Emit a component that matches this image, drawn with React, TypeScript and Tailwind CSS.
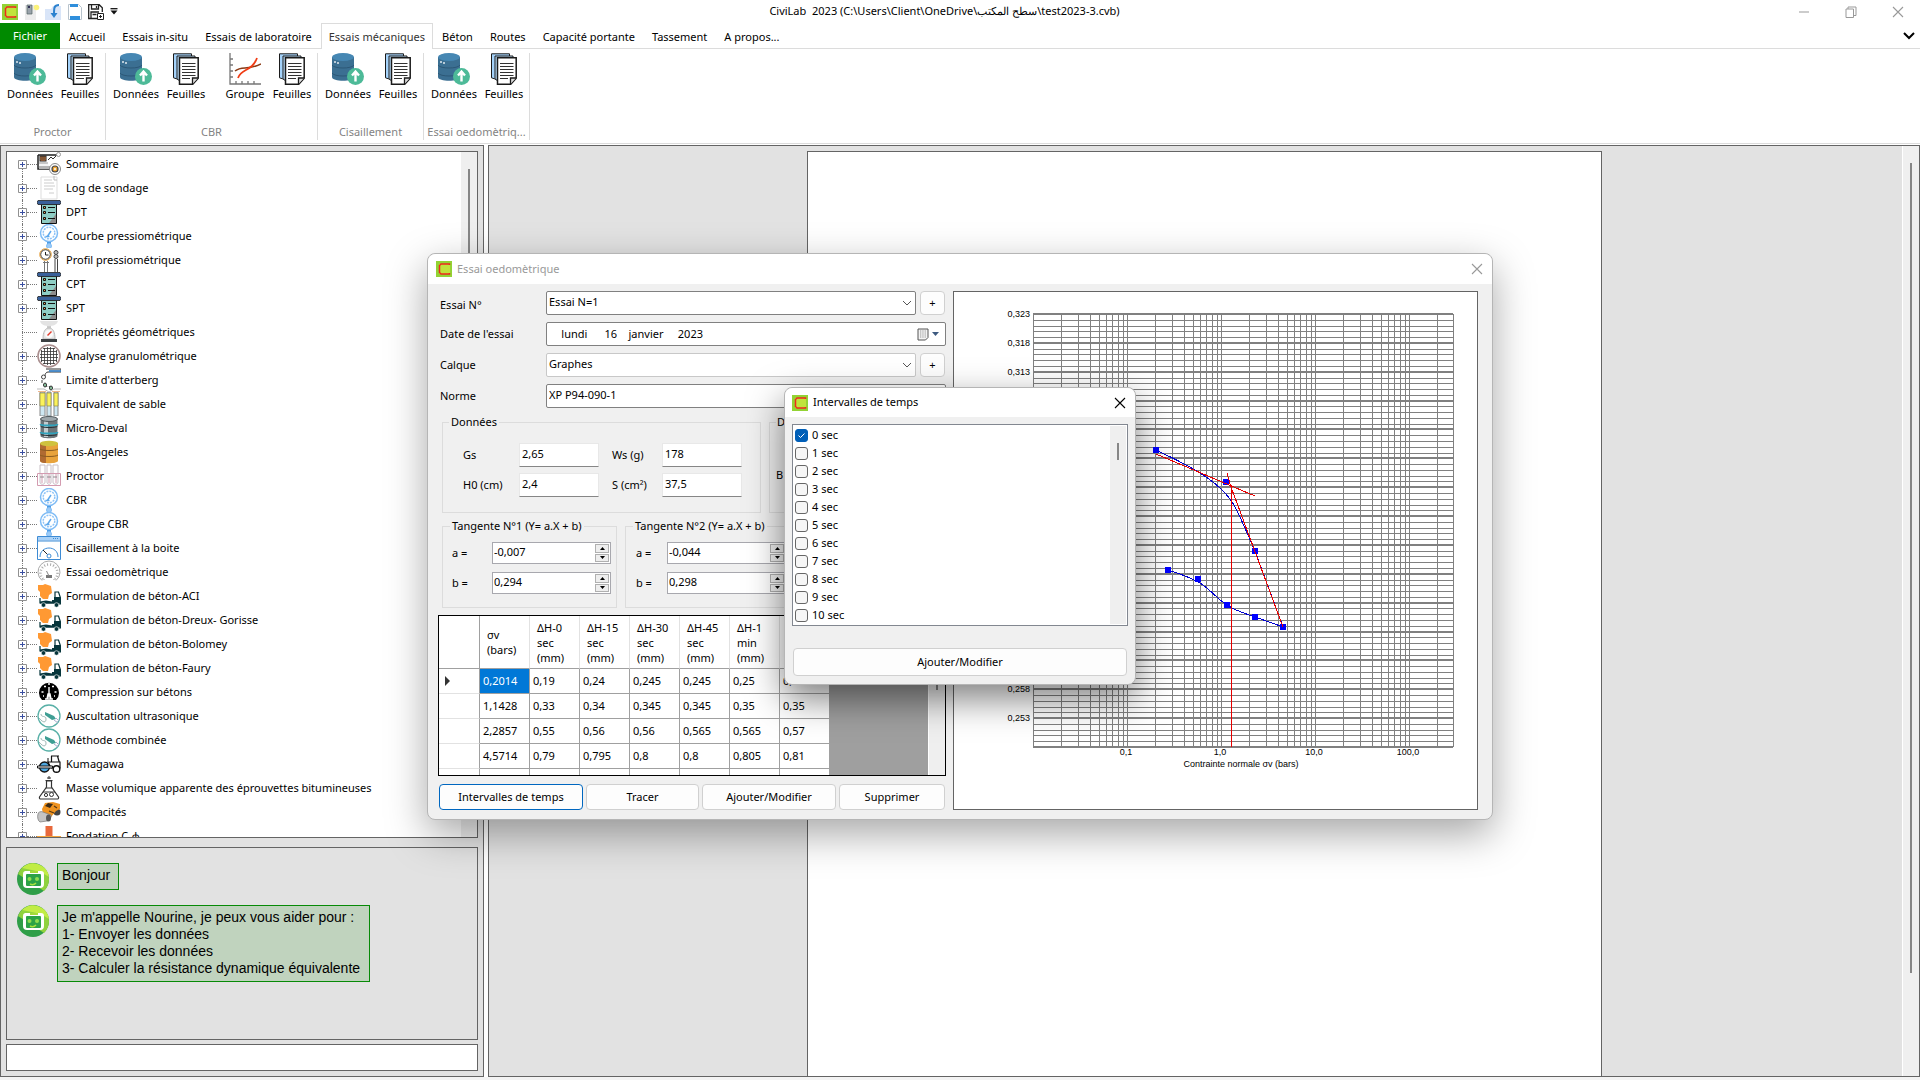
import React, { useState } from 'react';

type IconProps = { className?: string };

const tabs = [
  'Accueil',
  'Essais in-situ',
  'Essais de laboratoire',
  'Essais mécaniques',
  'Béton',
  'Routes',
  'Capacité portante',
  'Tassement',
  'A propos...',
];

const treeItems = [
  { label: 'Sommaire', icon: 'report' },
  { label: 'Log de sondage', icon: 'log' },
  { label: 'DPT', icon: 'server' },
  { label: 'Courbe pressiométrique', icon: 'gauge' },
  { label: 'Profil pressiométrique', icon: 'profile' },
  { label: 'CPT', icon: 'server' },
  { label: 'SPT', icon: 'server' },
  { label: 'Propriétés géométriques', icon: 'scale', leaf: true },
  { label: 'Analyse granulométrique', icon: 'sieve' },
  { label: "Limite d'atterberg", icon: 'tap' },
  { label: 'Equivalent de sable', icon: 'tubes' },
  { label: 'Micro-Deval', icon: 'barrel' },
  { label: 'Los-Angeles', icon: 'drum' },
  { label: 'Proctor', icon: 'rack' },
  { label: 'CBR', icon: 'gauge' },
  { label: 'Groupe CBR', icon: 'gauge' },
  { label: 'Cisaillement à la boite', icon: 'window' },
  { label: 'Essai oedomètrique', icon: 'dial' },
  { label: 'Formulation de béton-ACI', icon: 'truck' },
  { label: 'Formulation de béton-Dreux- Gorisse', icon: 'truck' },
  { label: 'Formulation de béton-Bolomey', icon: 'truck' },
  { label: 'Formulation de béton-Faury', icon: 'truck' },
  { label: 'Compression sur bétons', icon: 'press' },
  { label: 'Auscultation ultrasonique', icon: 'probe' },
  { label: 'Méthode combinée', icon: 'probe' },
  { label: 'Kumagawa', icon: 'roller' },
  { label: 'Masse volumique apparente des éprouvettes bitumineuses', icon: 'flask' },
  { label: 'Compacités', icon: 'compactor' },
  { label: 'Fondation C-φ', icon: 'footing' },
];

const headers = ['σv (bars)', 'ΔH-0 sec (mm)', 'ΔH-15 sec (mm)', 'ΔH-30 sec (mm)', 'ΔH-45 sec (mm)', 'ΔH-1 min (mm)', 'ΔH-2 min (mm)'];

const rows = [
  ['0,2014', '0,19', '0,24', '0,245', '0,245', '0,25', '0,25'],
  ['1,1428', '0,33', '0,34', '0,345', '0,345', '0,35', '0,35'],
  ['2,2857', '0,55', '0,56', '0,56', '0,565', '0,565', '0,57'],
  ['4,5714', '0,79', '0,795', '0,8', '0,8', '0,805', '0,81'],
  ['', '', '', '', '', '', ''],
];

const treeIcons: Record<string, React.ReactNode> = {
  report: (
    <>
      <path d="M1 3h20M1 3v14h15" stroke="#222" fill="#f4f4f4" strokeWidth="1.500" />
      <rect x="3" y="4" width="6" height="5" fill="#e58a45" stroke="#222" />
      <path d="M4 5h4M4 7h4" stroke="#222" />
      <path d="M11 8l3-3 2 2 5-5" stroke="#333" fill="none" />
      <circle cx="21.500" cy="2.500" r="2" fill="#fff" stroke="#999" />
      <path d="M2 14h12v3H2z" fill="#b5b5b5" />
      <path d="M2 11h9" stroke="#999" />
      <circle cx="18" cy="17" r="5.500" fill="#fff" stroke="#888" />
      <circle cx="18" cy="17" r="3" fill="#f0a532" stroke="#444" strokeWidth="1.200" />
      <circle cx="18" cy="17" r="1" fill="#fff" />
    </>
  ),
  log: (
    <>
      <path d="M4 1h16v22H4z" fill="#fff" stroke="#ddd" />
      <path d="M7 4h8M7 7h10M7 10h11M7 13h9M12 17h5" stroke="#ccc" />
      <path d="M17 0v4h3" stroke="#bbb" fill="none" />
    </>
  ),
  server: (
    <>
      <path d="M4.500 4h15v19.500h-15z" fill="#8ecdc4" stroke="#111" />
      <path d="M19 14v9h-7z" fill="#8d8d8d" />
      <path d="M11 7.500h7M11 12.500h7M11 18.500h7" stroke="#111" />
      <path d="M6.500 6.500h2v2h-2zM6.500 11.500h2v2h-2zM6.500 17.500h2v2h-2z" fill="#f0a050" stroke="#111" />
      <path d="M1 0.500h22l1 2-1 2H1l-1-2z" fill="#39609a" stroke="#222" strokeWidth="0.800" />
    </>
  ),
  gauge: (
    <>
      <circle cx="12" cy="9" r="8.500" fill="#fff" stroke="#7fbcf5" strokeWidth="1.500" />
      <circle cx="12" cy="9" r="5.800" fill="none" stroke="#8fc4f7" strokeWidth="1.500" strokeDasharray="2 1" />
      <path d="M10 13l4-6M8.500 12.500h4" stroke="#5ea8ec" strokeWidth="1.500" />
      <path d="M10 18h4v2h-4z" fill="#4e9de6" />
      <circle cx="12" cy="22" r="2.500" fill="#9ccbf7" stroke="#7fbcf5" />
    </>
  ),
  profile: (
    <>
      <circle cx="8.500" cy="6.500" r="4.800" fill="#fff" stroke="#222" />
      <circle cx="8.500" cy="6.500" r="5.800" fill="none" stroke="#e8a23c" />
      <path d="M8.500 4v3h3" stroke="#222" fill="none" />
      <path d="M7.500 13v11M10.500 13v11M6 14.500h6" stroke="#777" />
      <circle cx="19" cy="4.500" r="2" fill="#bbb" stroke="#444" />
      <circle cx="19" cy="8.500" r="2" fill="#bbb" stroke="#444" />
      <path d="M18 11v13M20.500 11v13" stroke="#444" />
    </>
  ),
  scale: (
    <>
      <path d="M3 1h18c-1 4-5 5-9 5S4 5 3 1z" fill="#e3e3e3" />
      <path d="M10 6h4v3h-4z" fill="#ccc" />
      <path d="M6 19c0-7 2-11 6-11s6 4 6 11z" fill="#e6e6e6" stroke="#bbb" />
      <circle cx="12" cy="14" r="4" fill="#fafafa" />
      <path d="M10.500 15.500l4-4" stroke="#e23b2c" strokeWidth="1.500" />
      <path d="M4 19h16v3H4z" fill="#3b3f42" />
    </>
  ),
  sieve: (
    <>
      <circle cx="12" cy="12" r="11" fill="#fff" stroke="#a98e8e" strokeWidth="1.600" />
      <path d="M4.500 6v12M7.500 4v16M10.500 3v18M13.500 3v18M16.500 4v16M19.500 6v12M6 4.500h12M4 7.500h16M3 10.500h18M3 13.500h18M4 16.500h16M6 19.500h12" stroke="#333" strokeWidth="0.800" />
    </>
  ),
  tap: (
    <>
      <path d="M9 1h15v3H11c-2 0-3 2-3 4" fill="#fff" stroke="#333" />
      <path d="M12 3h12" stroke="#3f84c6" strokeWidth="1.800" />
      <circle cx="6.500" cy="9" r="2" fill="#fff" stroke="#444" />
      <path d="M5 12v3M8 15l2 4M12 18l2 3" stroke="#444" />
      <ellipse cx="8" cy="17" rx="1.500" ry="2" fill="#8bc7a2" stroke="#333" />
      <ellipse cx="14" cy="20" rx="1.500" ry="2" fill="#8bc7a2" stroke="#333" />
      <path d="M0 21h7l5 3 5-3h7" fill="none" stroke="#bbb" />
      <path d="M1 23.500h8M15 23.500h8" stroke="#f0b58a" />
    </>
  ),
  tubes: (
    <>
      <path d="M3 0h5v24H3zM10 0h4v24h-4zM17 0h4v24h-4z" fill="#cde7f2" stroke="#888" />
      <path d="M3 1h5v13H3zM10 1h4v13h-4zM17 1h4v13h-4z" fill="#faf25a" stroke="#8c8a4e" strokeWidth="0.700" />
    </>
  ),
  barrel: (
    <>
      <path d="M3.500 3v17c0 3 17 3 17 0V3z" fill="#6d7579" />
      <path d="M7 3v18h4V3z" fill="#c3cbce" />
      <ellipse cx="12" cy="3" rx="8.500" ry="2.500" fill="#9da6aa" stroke="#4f575b" />
      <path d="M3.500 8c0 2 17 2 17 0M3.500 16c0 2 17 2 17 0" stroke="#2fa3bd" strokeWidth="2" fill="none" />
      <path d="M3.500 10c0 2 17 2 17 0M3.500 18c0 2 17 2 17 0" stroke="#252f33" fill="none" />
    </>
  ),
  drum: (
    <>
      <path d="M3 3v18c1 3 17 3 18 0V3z" fill="#e8a33c" />
      <path d="M3 3v18c1 2 4 2 6 2V5z" fill="#b06a32" />
      <ellipse cx="12" cy="3.500" rx="9" ry="2.700" fill="#cfc23e" />
      <path d="M3 9c2 2 16 2 18 0M3 15c2 2 16 2 18 0" stroke="#8a5b20" fill="none" />
    </>
  ),
  rack: (
    <>
      <path d="M3 1h5v17c0 3-5 3-5 0zM10 1h4v17c0 3-4 3-4 0zM16 1h5v17c0 3-5 3-5 0z" fill="#fff" stroke="#c9c0c6" />
      <path d="M0.500 9.500h23v12h-23zM5 10v9M12 10v9M19 10v9" fill="none" stroke="#d39bb0" />
      <path d="M3 13h4M10 13h4M16 13h4" stroke="#8f8a8e" />
    </>
  ),
  window: (
    <>
      <path d="M0.500 0.500h23v23H0.500z" fill="#fff" stroke="#3d8bd4" />
      <path d="M1 1h22v3.500H1z" fill="#a9d1f7" />
      <path d="M16 2.500h6" stroke="#3d8bd4" strokeDasharray="1 1" />
      <path d="M1 5h22M3 21c0-12 18-12 18 0" stroke="#3d8bd4" fill="none" />
      <path d="M6 14l5 5" stroke="#222" />
      <circle cx="12" cy="20" r="2" fill="#fff" stroke="#3d8bd4" />
    </>
  ),
  dial: (
    <>
      <path d="M5 20.500a11 11 0 1 1 14 0" fill="#fff" stroke="#aaa" />
      <path d="M6 19a8.500 8.500 0 1 1 12 0" fill="none" stroke="#aaa" strokeWidth="2.500" strokeDasharray="1 2" />
      <path d="M9 15h6v3H9z" fill="#777" />
      <path d="M12 16L9.500 11" stroke="#888" />
      <path d="M7 19v2M17 19v2" stroke="#999" strokeDasharray="1 1" />
    </>
  ),
  truck: (
    <>
      <path d="M3 14v5h15V8h3.500l2 6v6H21" fill="none" stroke="#06353b" strokeWidth="1.200" />
      <path d="M3 17.500l6-1 6 1V16h2v-3h6v6.500H3z" fill="#06353b" />
      <path d="M1 1h5l2-1 6 2 1 7-3 2-1 4H6l-3-3V8L1 6z" fill="#ff9933" />
      <circle cx="6.500" cy="21" r="2.300" fill="#06353b" stroke="#fff" strokeWidth="0.600" />
      <circle cx="19.500" cy="21" r="2.300" fill="#06353b" stroke="#fff" strokeWidth="0.600" />
    </>
  ),
  press: (
    <>
      <path d="M5 20a10 10 0 1 1 14 0z" fill="#000" />
      <path d="M12 7v11M10 19l1-5h2l1 5M8 19h8" stroke="#fff" strokeWidth="1.400" fill="none" />
      <path d="M7 6.500h2M15 6.500h2M4.500 12h2M17.500 12h2M6 16h1M17 16h1M11 4h2" stroke="#fff" strokeWidth="1.600" />
    </>
  ),
  probe: (
    <>
      <circle cx="12" cy="12" r="11" fill="#fff" stroke="#58b0a7" strokeWidth="1.300" />
      <path d="M8 8l9 4 2 3-4 1-7-5z" fill="#3f9e94" />
      <path d="M2 14c4 5 7 5 7 1s-5-1-5-5" stroke="#9fb7b5" fill="none" />
      <path d="M17 16l4 3M19 14l3 3" stroke="#aac" />
    </>
  ),
  roller: (
    <>
      <path d="M14 4h8M14.500 4v6M20.500 4l2 7" fill="none" stroke="#111" strokeWidth="1.200" />
      <path d="M11 10h12v6H14z" fill="#fff" stroke="#111" strokeWidth="1.200" />
      <path d="M11 6v4" stroke="#111" />
      <circle cx="7.500" cy="15" r="5" fill="#4fa8e0" stroke="#111" strokeWidth="1.300" />
      <path d="M0.500 14h15v2h-15z" fill="#fff" stroke="#111" />
      <circle cx="19.500" cy="17" r="3.300" fill="#fff" stroke="#111" strokeWidth="1.400" />
    </>
  ),
  flask: (
    <>
      <path d="M9.500 5h5v6l7 10c.500 1.500-.500 2-1.500 2H4c-1 0-2-.500-1.500-2l7-10z" fill="#fff" stroke="#333" strokeWidth="1.200" />
      <path d="M8.500 4.500h7M12 0v3M10 2h4M9 12h6M6 16h12" stroke="#333" />
      <circle cx="9" cy="19" r="1.600" fill="#fff" stroke="#333" />
      <circle cx="14.500" cy="18.500" r="2" fill="#fff" stroke="#333" />
    </>
  ),
  compactor: (
    <>
      <circle cx="20" cy="12" r="3.500" fill="#444" />
      <path d="M5 9l3-6 8-1 7 2v5l-4 2-5 6-8-3z" fill="#f0931f" />
      <path d="M8 6l3-3 5 1-3 4z" fill="#3c2b17" />
      <path d="M12 11l5 2M17 6l3 2" stroke="#5b3a12" strokeWidth="1.300" fill="none" />
      <path d="M1 14c0-2 3-3 5-2l8 3c1 2-2 6-4 6l-7 1c-2-1-3-5-2-8z" fill="#c4c4c4" stroke="#777" strokeWidth="0.700" />
      <ellipse cx="11.500" cy="18" rx="2.500" ry="3.500" fill="#555" />
    </>
  ),
  footing: (
    <>
      <path d="M8.500 2h7v10h-7z" fill="#e8693c" />
      <path d="M0 12h24v3H0z" fill="#f3a33b" />
    </>
  ),
};

const TreeIcon: React.FC<{ name: string }> = ({ name }) => (
  <svg viewBox="0 0 24 24" className="w-6 h-6 shrink-0">
    {treeIcons[name]}
  </svg>
);

const Logo: React.FC<IconProps> = ({ className }) => (
  <svg viewBox="0 0 16 16" className={className}>
    <rect width="16" height="16" fill="#93d334" />
    <rect x="3" y="3" width="11" height="10" fill="#c0e33c" />
    <path d="M13.500 4V3H5L3.500 4.500v7L5 13h8.500v-1" fill="none" stroke="#ee2a1c" strokeWidth="1.500" />
  </svg>
);

const DataIcon: React.FC = () => (
  <svg viewBox="0 0 32 32" className="w-8 h-8">
    <path d="M0 4v20c0 5 22 5 22 0V4z" fill="#3b6f92" />
    <ellipse cx="11" cy="4" rx="11" ry="4" fill="#4687b3" />
    <path d="M0 12c2 4 20 4 22 0M0 20c2 4 20 4 22 0" stroke="#2c5877" fill="none" />
    <path d="M2 9h2M5 10h2" stroke="#dfe9ef" strokeWidth="1.500" />
    <circle cx="23.500" cy="23.500" r="8.500" fill="#4dba98" />
    <path d="M23.500 28.500v-9M20 22.500l3.500-4 3.500 4" stroke="#fff" strokeWidth="2.400" fill="none" />
  </svg>
);

const SheetsIcon: React.FC = () => (
  <svg viewBox="0 0 32 32" className="w-8 h-8">
    <path d="M3.500 0.800h18v25h-15l-3-1z" fill="#a5d3fb" stroke="#1b1b1b" />
    <path d="M7 3h18v25H10l-3-2z" fill="#b9dcfa" stroke="#1b1b1b" />
    <path d="M9.500 4.800h18.700v20.500l-5.500 6H9.500z" fill="#fff" stroke="#1b1b1b" strokeWidth="1.500" />
    <path d="M12 10.500h13.500M12 13.500h13.500M12 16.500h13.500M12 19.500h13.500M12 22.500h13.500M12 25.500h8" stroke="#333" strokeWidth="1.100" />
    <path d="M28 25h-5.500v6" fill="#ddd" stroke="#1b1b1b" strokeWidth="1.300" />
  </svg>
);

const GroupIcon: React.FC = () => (
  <svg viewBox="0 0 32 32" className="w-8 h-8">
    <path d="M1 0v31h31M1 6h3M1 12h3M1 18h3M1 24h3M7 31v-3M13 31v-3M19 31v-3M25 31v-3" stroke="#777" strokeWidth="1.300" fill="none" />
    <path d="M6 18c7-6 12 0 26-7" stroke="#8b3a14" strokeWidth="1.500" fill="none" />
    <path d="M9 25c3-10 14-6 19-20" stroke="#f03c14" strokeWidth="1.800" fill="none" />
  </svg>
);

const RibbonButton: React.FC<{ label: string; icon: React.ReactNode; className: string }> = ({ label, icon, className }) => (
  <button type="button" className={`flex flex-col items-center gap-px ${className}`}>
    {icon}
    <span className="leading-4">{label}</span>
  </button>
);

const RibbonGroup: React.FC<{ label: string; className: string; children: React.ReactNode }> = ({ label, className, children }) => (
  <div className={`flex flex-col justify-between border-r border-[#dcdcdc] ${className}`}>
    <div className="flex pl-[3px]">{children}</div>
    <div className="px-px text-center leading-4 text-[#838383]">{label}</div>
  </div>
);

const CloseIcon: React.FC<IconProps> = ({ className }) => (
  <svg viewBox="0 0 12 12" className={className}>
    <path d="M1 1l10 10M11 1L1 11" stroke="currentColor" strokeWidth="1.100" fill="none" />
  </svg>
);

const TitleBar: React.FC = () => (
  <header className="flex h-[23px] items-center">
    <div className="flex flex-1 items-center pl-[2px]">
      <Logo className="h-4 w-4" />
      <button type="button" aria-label="Nouveau" className="ml-[6px]">
        <svg viewBox="0 0 16 16" className="h-4 w-4">
          <path d="M1 1h11v15H1z" fill="#ececec" />
          <path d="M3 1h5v9H3z" fill="#9aa3ab" stroke="#566" strokeWidth="0.700" />
          <path d="M4 2h2v2H4z" fill="#335" />
          <circle cx="12.500" cy="3.500" r="2.800" fill="#fbf27a" />
        </svg>
      </button>
      <button type="button" aria-label="Ouvrir" className="ml-[5px]">
        <svg viewBox="0 0 16 16" className="h-4 w-4">
          <path d="M0 5h6l2-3h8v14H0z" fill="#d9e5f8" />
          <path d="M14 1c-5 0-5 3-5 9" stroke="#2c82cf" strokeWidth="2" fill="none" />
          <path d="M5.500 9h7L9 14z" fill="#2c82cf" />
        </svg>
      </button>
      <button type="button" aria-label="Enregistrer" className="ml-[6px]">
        <svg viewBox="0 0 16 16" className="h-4 w-4">
          <path d="M1.500 0.500h10l3 3v12h-13z" fill="#fff" stroke="#b8c3cc" />
          <path d="M3 0h8v3H3zM3 12h10v4H3z" fill="#2f8fdc" />
        </svg>
      </button>
      <button type="button" aria-label="Enregistrer sous" className="ml-[5px]">
        <svg viewBox="0 0 16 16" className="h-4 w-4">
          <path d="M9 14.500H0.700V0.700h10.500l3.100 3V8M3.500 1v4h7V1M8.500 2v2M3 14V8h8M4.500 10.500h4" fill="none" stroke="#222" strokeWidth="1.300" />
          <path d="M9.500 9.500h6v6h-6zM12.500 11v3M11 12.500h3" fill="#fff" stroke="#222" />
        </svg>
      </button>
      <button type="button" aria-label="Personnaliser" className="ml-[6px]">
        <svg viewBox="0 0 8 8" className="h-2 w-2">
          <path d="M0.500 0.700h7" stroke="#111" strokeWidth="1.300" />
          <path d="M0.500 2.500h7L4 6.500z" fill="#111" />
        </svg>
      </button>
    </div>
    <h1 className="whitespace-pre pr-[17px]">{'CiviLab  2023 (C:\\Users\\Client\\OneDrive\\سطح المكتب\\test2023-3.cvb)'}</h1>
    <div className="flex flex-1 items-center justify-end gap-[35px] pr-4 text-[#999]">
      <button type="button" aria-label="Réduire">
        <svg viewBox="0 0 12 12" className="h-3 w-3">
          <path d="M1 6h10" stroke="currentColor" />
        </svg>
      </button>
      <button type="button" aria-label="Restaurer">
        <svg viewBox="0 0 12 12" className="h-3 w-3">
          <path d="M1 3h7.500v8.500H1zM3 3V1h8v8.500H9" stroke="currentColor" fill="none" />
        </svg>
      </button>
      <button type="button" aria-label="Fermer">
        <CloseIcon className="h-3 w-3" />
      </button>
    </div>
  </header>
);

const Ribbon: React.FC = () => (
  <>
    <nav className="flex h-[26px] items-stretch gap-px border-b border-[#dcdcdc]">
      <button type="button" className="-mb-px w-[60px] bg-[#008a00] text-white">
        Fichier
      </button>
      {tabs.map((tab) =>
        tab === 'Essais mécaniques' ? (
          <button key={tab} type="button" className="-mb-px border border-b-0 border-[#dcdcdc] bg-white px-[7px] pt-px text-[#333]">
            {tab}
          </button>
        ) : (
          <button key={tab} type="button" className="px-2 pt-[3px]">
            {tab}
          </button>
        ),
      )}
      <button type="button" aria-label="Réduire le ruban" className="ml-auto mr-[5px]">
        <svg viewBox="0 0 12 8" className="h-2 w-3">
          <path d="M1 1l5 5 5-5" stroke="#000" strokeWidth="2" fill="none" />
        </svg>
      </button>
    </nav>
    <div className="flex h-[95px] border-b border-[#dcdcdc] pt-1 pb-[3px]">
      <RibbonGroup label="Proctor" className="w-[106px]">
        <RibbonButton label="Données" icon={<DataIcon />} className="w-[54px]" />
        <RibbonButton label="Feuilles" icon={<SheetsIcon />} className="w-[46px]" />
      </RibbonGroup>
      <RibbonGroup label="CBR" className="w-[212px]">
        <RibbonButton label="Données" icon={<DataIcon />} className="w-[54px]" />
        <RibbonButton label="Feuilles" icon={<SheetsIcon />} className="w-[46px]" />
        <RibbonButton label="Groupe" icon={<GroupIcon />} className="ml-3 w-[48px]" />
        <RibbonButton label="Feuilles" icon={<SheetsIcon />} className="w-[46px]" />
      </RibbonGroup>
      <RibbonGroup label="Cisaillement" className="w-[106px]">
        <RibbonButton label="Données" icon={<DataIcon />} className="w-[54px]" />
        <RibbonButton label="Feuilles" icon={<SheetsIcon />} className="w-[46px]" />
      </RibbonGroup>
      <RibbonGroup label="Essai oedomètriq..." className="w-[106px]">
        <RibbonButton label="Données" icon={<DataIcon />} className="w-[54px]" />
        <RibbonButton label="Feuilles" icon={<SheetsIcon />} className="w-[46px]" />
      </RibbonGroup>
    </div>
  </>
);

const Tree: React.FC = () => (
  <div className="flex min-h-0 flex-1 overflow-hidden border border-[#646464] bg-white">
    <ul className="min-w-0 flex-1 pl-[11px]">
      {treeItems.map((item, i) => (
        <li key={item.label} className="flex h-6 items-center">
          <div className="flex w-[19px] shrink-0 flex-col self-stretch">
            <div className={`ml-1 flex-1 ${i > 0 ? 'border-l border-dotted border-[#777]' : ''}`} />
            {item.leaf ? (
              <div className="ml-1 border-t border-dotted border-[#777]" />
            ) : (
              <div className="flex items-center">
                <button type="button" aria-label={`Développer ${item.label}`} className="h-[9px] w-[9px]">
                  <svg viewBox="0 0 9 9" className="block h-[9px] w-[9px]">
                    <path d="M0.500 0.500h8v8h-8z" fill="#fff" stroke="#919191" />
                    <path d="M2 4.500h5M4.500 2v5" stroke="#3a4fa0" />
                  </svg>
                </button>
                <div className="flex-1 border-t border-dotted border-[#777]" />
              </div>
            )}
            <div className="ml-1 flex-1 border-l border-dotted border-[#777]" />
          </div>
          <TreeIcon name={item.icon} />
          <span className="ml-[5px] whitespace-nowrap leading-4">{item.label}</span>
        </li>
      ))}
    </ul>
    <div className="flex w-4 justify-center bg-[#efefef] pt-[17px]">
      <div className="h-[420px] w-[2px] bg-[#868686]" />
    </div>
  </div>
);

const BotAvatar: React.FC = () => (
  <svg viewBox="0 0 32 32" className="h-8 w-8 shrink-0">
    <circle cx="16" cy="16" r="16" fill="#2f9e48" />
    <path d="M1 11a16 16 0 0 1 31 5c0 6-3 10-5 12z" fill="#8fd23e" />
    <path d="M5 5a16 16 0 0 1 27 9l-8-5z" fill="#c1ec45" />
    <path d="M8 8h16a3 3 0 0 1 3 3v2v8a4 4 0 0 1-4 4H10a4 4 0 0 1-4-4V11a3 3 0 0 1 2-3z" fill="#fff" />
    <rect x="9" y="11" width="15" height="12" rx="1" fill="#2ba247" />
    <path d="M13 9h8" stroke="#a4da3a" strokeWidth="2" />
    <circle cx="12.500" cy="16" r="2" fill="#8fdc4f" />
    <circle cx="20" cy="16" r="2" fill="#8fdc4f" />
    <path d="M13 21c2 1 4 1 6-1" stroke="#a8e23f" strokeWidth="1.500" fill="none" />
  </svg>
);

const Chat: React.FC = () => (
  <>
    <section className="mt-[9px] flex h-[193px] flex-col gap-[10px] border border-[#646464] bg-[#e2e2e2] py-[15px] pl-[10px] font-['Liberation_Sans',sans-serif] text-[14px] leading-4">
      <div className="flex gap-2">
        <BotAvatar />
        <p className="h-[27px] border border-[#078a07] bg-[#c0d3be] pt-[3px] pl-1 pr-2">Bonjour</p>
      </div>
      <div className="flex gap-2">
        <BotAvatar />
        <p className="h-[77px] border border-[#078a07] bg-[#c0d3be] pt-[3px] pl-1 pr-[9px] leading-[17px]">
          Je m'appelle Nourine, je peux vous aider pour :
          <br />
          1- Envoyer les données
          <br />
          2- Recevoir les données
          <br />
          3- Calculer la résistance dynamique équivalente
        </p>
      </div>
    </section>
    <input aria-label="Message" className="mt-1 h-[27px] border border-[#646464] bg-white px-1 outline-none" />
  </>
);

const SelectBox: React.FC<{ id: string; value: string; border: string }> = ({ id, value, border }) => (
  <div className="relative flex-1">
    <select id={id} className={`h-6 w-full appearance-none rounded-[2px] border bg-white px-[2px] pb-[2px] outline-none ${border}`}>
      <option>{value}</option>
    </select>
    <svg viewBox="0 0 10 6" className="pointer-events-none absolute right-1 top-[9px] h-[6px] w-[10px]">
      <path d="M1 1l4 4 4-4" stroke="#555" fill="none" />
    </svg>
  </div>
);

const AddButton: React.FC = () => (
  <button type="button" aria-label="Ajouter" className="ml-1 mr-px h-6 w-[25px] rounded-[4px] border border-[#d0d0d0] bg-[#fdfdfd] leading-4">
    +
  </button>
);

const Field: React.FC<{ id: string; label: string; value: string }> = ({ id, label, value }) => (
  <>
    <label htmlFor={id}>{label}</label>
    <input id={id} defaultValue={value} className="h-6 w-full min-w-0 border border-[#e8e8e8] border-b-[#868686] bg-white px-[2px] pb-[3px] outline-none" />
  </>
);

const Spinner: React.FC<{ id: string; label: string; value: string }> = ({ id, label, value }) => (
  <>
    <label htmlFor={id}>{label}</label>
    <div className="flex h-[22px] border border-[#a8a8ae] bg-white">
      <input id={id} defaultValue={value} className="w-0 min-w-0 flex-1 px-px pb-[2px] outline-none" />
      <div className="m-px flex w-[14px] flex-col gap-px">
        <button type="button" aria-label={`Augmenter ${label}`} className="flex flex-1 items-center justify-center border border-[#b0b0b0] bg-[#eee]">
          <svg viewBox="0 0 5 3" className="h-[3px] w-[5px]">
            <path d="M0 3L2.500 0 5 3z" fill="#000" />
          </svg>
        </button>
        <button type="button" aria-label={`Diminuer ${label}`} className="flex flex-1 items-center justify-center border border-[#b0b0b0] bg-[#eee]">
          <svg viewBox="0 0 5 3" className="h-[3px] w-[5px]">
            <path d="M0 0L2.500 3 5 0z" fill="#000" />
          </svg>
        </button>
      </div>
    </div>
  </>
);

const DataGrid: React.FC = () => (
  <div className="mt-[7px] flex h-[161px] overflow-hidden border border-black bg-[#9f9f9f]">
    <table className="w-[391px] shrink-0 table-fixed border-separate border-spacing-0 self-start bg-white">
      <thead>
        <tr className="h-[53px]">
          <th className="w-[41px] border-b border-r border-[#a0a0a0]" />
          {headers.map((header) => (
            <th key={header} className="w-[50px] border-b border-r border-b-[#a0a0a0] border-r-[#e2e2e2] p-0 pl-[7px] pr-1 text-left font-normal leading-[15px]">
              {header}
            </th>
          ))}
        </tr>
      </thead>
      <tbody>
        {rows.map((row, r) => (
          <tr key={row[0]} className="h-[25px]">
            <td className="border-b border-r border-b-[#e2e2e2] border-r-[#a0a0a0] pl-[6px]">
              {r === 0 && (
                <svg viewBox="0 0 5 10" className="h-[10px] w-[5px]">
                  <path d="M0 0l5 5-5 5z" fill="#333" />
                </svg>
              )}
            </td>
            {row.map((cell, c) => (
              <td
                key={c}
                className={
                  r === 0 && c === 0
                    ? 'border-b border-r border-[#a0a0a0] bg-[#0078d7] pl-[3px] leading-4 text-white'
                    : 'border-b border-r border-[#a0a0a0] pl-[3px] leading-4'
                }
              >
                {cell}
              </td>
            ))}
          </tr>
        ))}
      </tbody>
    </table>
    <div className="ml-auto flex w-[17px] justify-center border-l border-white bg-[#efefef] pt-[17px]">
      <div className="h-[57px] w-[2px] bg-[#868686]" />
    </div>
  </div>
);

// log scale: 0.01 bar sits on the left edge of the grid
const ORIGIN_X = 79;
const DECADE = 94;
const TOP = 22;
const BOTTOM = 455;
const RIGHT = 499;

const logLines: number[] = [];
for (let d = 0; d < 5; d++) {
  for (let n = 1; n < 10; n++) {
    const x = Math.round(ORIGIN_X + DECADE * (d + Math.log10(n)));
    if (x <= RIGHT) logLines.push(x);
  }
}
const yOf = (i: number) => Math.round(TOP + ((BOTTOM - TOP) * i) / 75);

const loadPoints = [[202, 158], [272, 190], [301, 259], [329, 335]];
const unloadPoints = [[214, 278], [244, 287], [273, 313], [301, 325]];

const Chart: React.FC = () => (
  <svg viewBox="0 0 523 517" className="h-[517px] w-[523px]" shapeRendering="crispEdges">
    <g stroke="#808080">
      {logLines.map((x) => (
        <path key={x} d={`M${x + 0.5} ${TOP}V${BOTTOM}`} />
      ))}
      <path d={`M${RIGHT + 0.5} ${TOP}V${BOTTOM}`} />
      {Array.from({ length: 76 }, (_, i) => (
        <path key={i} d={`M${ORIGIN_X} ${yOf(i) + (i % 5 ? 0.5 : 0)}H${RIGHT}`} strokeWidth={i % 5 ? 1 : 2} />
      ))}
    </g>
    <g className="font-['Liberation_Sans',sans-serif] text-[9px]" fill="#000">
      {Array.from({ length: 15 }, (_, i) => (
        <text key={i} x="76" y={yOf(i * 5) + 3} textAnchor="end">
          {(0.323 - i * 0.005).toFixed(3).replace('.', ',')}
        </text>
      ))}
      {['0,1', '1,0', '10,0', '100,0'].map((t, i) => (
        <text key={t} x={172 + i * 94} y="463" textAnchor="middle">
          {t}
        </text>
      ))}
      <text x="287" y="475" textAnchor="middle">
        Contrainte normale σv (bars)
      </text>
    </g>
    <path d="M202 158C225 169 250 181 266 196S284 221 301 259L329 335" stroke="#0000d0" fill="none" />
    <path d="M214 278C226 282 236 285 246 291S262 306 273 313 290 321 301 325L329 335" stroke="#0000d0" fill="none" />
    <g fill="#0000ff">
      {[...loadPoints, ...unloadPoints].map(([x, y]) => (
        <rect key={`${x}-${y}`} x={x - 3} y={y - 3} width="6" height="6" />
      ))}
    </g>
    <path d="M202 162L301 204M273 181L277 195 329 335M277.500 194V455" stroke="#e80000" fill="none" />
  </svg>
);

const pushButton = 'rounded-[4px] border border-[#d0d0d0] bg-[#fdfdfd]';

const OedometerDialog: React.FC = () => (
  <section
    role="dialog"
    aria-label="Essai oedomètrique"
    className="absolute left-[427px] top-[253px] w-[1066px] rounded-lg border border-[#b5b5b5] bg-[#f0f0f0] shadow-[0_14px_40px_rgba(0,0,0,0.35)]"
  >
    <header className="flex h-[30px] items-center rounded-t-lg bg-white pl-2 pr-[9px] text-[#999]">
      <Logo className="h-4 w-4" />
      <h2 className="ml-[5px]">Essai oedomètrique</h2>
      <button type="button" aria-label="Fermer" className="ml-auto">
        <CloseIcon className="h-3 w-3" />
      </button>
    </header>
    <div className="flex gap-[7px] pb-[9px] pl-[10px] pr-3 pt-[7px]">
      <form className="w-[508px] shrink-0">
        <div className="flex flex-col gap-[7px]">
          <div className="flex items-center">
            <label htmlFor="essai" className="w-[108px] pl-[2px] pt-1">Essai N°</label>
            <SelectBox id="essai" value="Essai N=1" border="border-[#808080]" />
            <AddButton />
          </div>
          <div className="flex items-center">
            <label htmlFor="date" className="w-[108px] pl-[2px]">Date de l'essai</label>
            <div className="flex h-6 flex-1 items-center rounded-[2px] border border-[#808080] bg-white pr-[6px]">
              <input id="date" defaultValue="     lundi      16    janvier     2023" className="min-w-0 flex-1 outline-none" />
              <button type="button" aria-label="Calendrier" className="flex items-center gap-[3px]">
                <svg viewBox="0 0 12 13" className="h-[13px] w-3">
                  <path d="M1 1h10v8.500L8.500 12H1z" fill="#f3f3f3" stroke="#555" />
                  <path d="M3 3h6M3 5h6M3 7h6M3 9h6" stroke="#999" strokeDasharray="1.300 1" />
                </svg>
                <svg viewBox="0 0 7 4" className="h-1 w-[7px]">
                  <path d="M0 0h7L3.500 4z" fill="#3d5a80" />
                </svg>
              </button>
            </div>
          </div>
          <div className="flex items-center">
            <label htmlFor="calque" className="w-[108px] pl-[2px]">Calque</label>
            <SelectBox id="calque" value="Graphes" border="border-[#c8c8c8]" />
            <AddButton />
          </div>
          <div className="flex items-center">
            <label htmlFor="norme" className="w-[108px] pl-[2px]">Norme</label>
            <input id="norme" defaultValue="XP P94-090-1" className="h-6 flex-1 rounded-[2px] border border-[#808080] bg-white px-[2px] pb-1 outline-none" />
          </div>
        </div>

        <div className="mt-[6px] flex gap-2 pl-1">
          <fieldset className="h-[99px] w-[319px] shrink-0 border border-[#dcdcdc] pl-5 pt-[13px]">
            <legend className="-ml-[14px] px-[2px] leading-4">Données</legend>
            <div className="grid grid-cols-[56px_80px_63px_80px] items-center gap-y-[6px] [&>label:nth-of-type(even)]:pl-[13px]">
              <Field id="gs" label="Gs" value="2,65" />
              <Field id="ws" label="Ws (g)" value="178" />
              <Field id="h0" label="H0 (cm)" value="2,4" />
              <Field id="s" label="S (cm²)" value="37,5" />
            </div>
          </fieldset>
          <fieldset className="h-[99px] min-w-0 flex-1 border border-[#dcdcdc] pl-[6px] pt-[37px]">
            <legend className="px-[1px] leading-4">Dates</legend>
            <span className="leading-4">B</span>
          </fieldset>
        </div>

        <div className="mt-[5px] flex gap-2 pl-1">
          <fieldset className="h-[90px] w-[175px] min-w-0 shrink-0 border border-[#dcdcdc] pl-[9px] pr-[6px] pt-[8px]">
            <legend className="-ml-[2px] whitespace-nowrap px-[2px] leading-4">Tangente N°1 (Y= a.X + b)</legend>
            <div className="grid grid-cols-[40px_119px] items-center gap-y-2">
              <Spinner id="a1" label="a =" value="-0,007" />
              <Spinner id="b1" label="b =" value="0,294" />
            </div>
          </fieldset>
          <fieldset className="h-[90px] min-w-0 flex-1 border border-[#dcdcdc] pl-[10px] pt-[8px]">
            <legend className="-ml-[3px] whitespace-nowrap px-[2px] leading-4">Tangente N°2 (Y= a.X + b)</legend>
            <div className="grid grid-cols-[31px_119px] items-center gap-y-2">
              <Spinner id="a2" label="a =" value="-0,044" />
              <Spinner id="b2" label="b =" value="0,298" />
            </div>
          </fieldset>
        </div>

        <DataGrid />

        <div className="mt-[8px] flex h-[26px] gap-[3px] pl-px pr-px">
          <button type="button" className="w-[144px] rounded-[4px] border border-[#0067c0] bg-[#fdfdfd]">Intervalles de temps</button>
          <button type="button" className={`w-[113px] ${pushButton}`}>Tracer</button>
          <button type="button" className={`w-[134px] ${pushButton}`}>Ajouter/Modifier</button>
          <button type="button" className={`flex-1 ${pushButton}`}>Supprimer</button>
        </div>
      </form>
      <div className="border border-[#646464] bg-white">
        <Chart />
      </div>
    </div>
  </section>
);

const IntervalsDialog: React.FC = () => {
  const [checked, setChecked] = useState<number[]>([0]);

  const toggle = (n: number) => {
    setChecked(checked.includes(n) ? checked.filter((c) => c !== n) : [...checked, n]);
  };

  return (
    <section
      role="dialog"
      aria-label="Intervalles de temps"
      className="absolute left-[784px] top-[387px] w-[352px] rounded-lg border border-[#b5b5b5] bg-[#f0f0f0] pb-2 shadow-[0_14px_36px_rgba(0,0,0,0.5)]"
    >
      <header className="flex h-[29px] items-center rounded-t-lg bg-white pl-[7px] pr-[9px]">
        <Logo className="h-4 w-4" />
        <h2 className="ml-[5px]">Intervalles de temps</h2>
        <button type="button" aria-label="Fermer" className="ml-auto">
          <CloseIcon className="h-3 w-3" />
        </button>
      </header>
      <div className="mx-[7px] mt-[7px] flex h-[202px] border border-[#828790] bg-white p-px">
        <ul className="flex-1">
          {Array.from({ length: 11 }, (_, n) => (
            <li key={n} className="flex h-[18px] items-center">
              <label className="flex items-center gap-1 pl-px">
                <input
                  type="checkbox"
                  checked={checked.includes(n)}
                  onChange={() => toggle(n)}
                  className="peer h-[13px] w-[13px] appearance-none rounded-[3px] border border-[#666] bg-[#f6f6f6] checked:border-[#005fb8] checked:bg-[#005fb8]"
                />
                <svg viewBox="0 0 13 13" className="-ml-[17px] mr-0 hidden h-[13px] w-[13px] peer-checked:block">
                  <path d="M3.500 6.500l2 2 4-4" stroke="#fff" fill="none" />
                </svg>
                <span className="leading-4">{n} sec</span>
              </label>
            </li>
          ))}
        </ul>
        <div className="flex w-4 justify-center bg-[#efefef] pt-[17px]">
          <div className="h-[17px] w-[2px] bg-[#868686]" />
        </div>
      </div>
      <div className="px-2 pt-[22px]">
        <button type="button" className={`h-7 w-full ${pushButton}`}>Ajouter/Modifier</button>
      </div>
    </section>
  );
};

const App: React.FC = () => {
  return (
    <div className="relative flex h-screen w-full flex-col overflow-hidden bg-white font-['Noto_Sans','Open_Sans',sans-serif] text-[11px] text-black">
      <TitleBar />
      <Ribbon />
      <main className="mt-px flex min-h-0 flex-1 gap-[4px]">
        <aside className="flex w-[484px] shrink-0 flex-col border border-[#646464] bg-[#e2e2e2] p-[5px]">
          <Tree />
          <Chat />
        </aside>
        <section className="flex min-w-0 flex-1 border border-[#646464] bg-[#e2e2e2]">
          <div className="flex flex-1 justify-center pt-[5px] pl-[18px]">
            <div className="w-[795px] border-x border-t border-[#646464] bg-white" />
          </div>
          <div className="flex w-[17px] justify-center border-l border-white bg-[#efefef] py-[17px]">
            <div className="mb-[86px] w-[2px] bg-[#868686]" />
          </div>
        </section>
      </main>
      <footer className="h-[3px] shrink-0 bg-[#f3f3f3]" />
      <OedometerDialog />
      <IntervalsDialog />
    </div>
  );
};

export default App;
